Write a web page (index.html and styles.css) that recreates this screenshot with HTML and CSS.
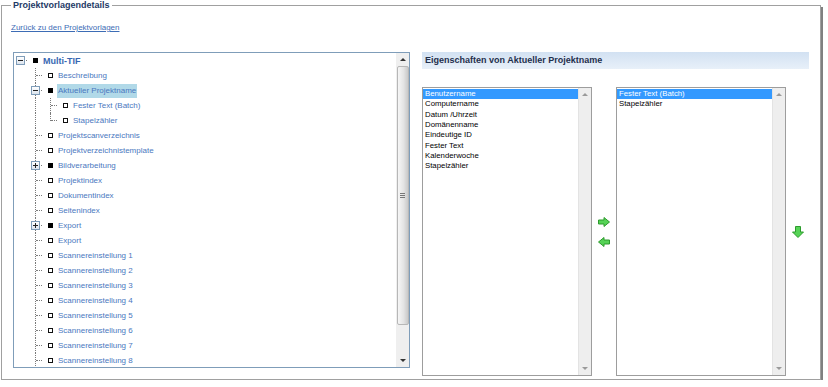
FILE: index.html
```html
<!DOCTYPE html>
<html>
<head>
    <title>Projektvorlagendetails</title>
    <link rel="stylesheet" href="styles.css">
</head>
<body>
    <fieldset class="details">
        <legend>Projektvorlagendetails</legend>
        <a class="back" href="#">Zurück zu den Projektvorlagen</a>

        <div class="main">
            <div class="tree">
                <div class="nodes">
                    <div class="row">
                        <span class="cell exp"><span class="toggle minus"></span></span>
                        <span class="box branch"></span>
                        <span class="label root">Multi-TIF</span>
                    </div>
                    <div class="row">
                        <span class="cell"></span><span class="cell tee"></span>
                        <span class="box leaf"></span><span class="label">Beschreibung</span>
                    </div>
                    <div class="row">
                        <span class="cell"></span><span class="cell tee"><span class="toggle minus"></span></span>
                        <span class="box branch"></span><span class="label selected">Aktueller Projektname</span>
                    </div>
                    <div class="row">
                        <span class="cell"></span><span class="cell pipe"></span><span class="cell tee"></span>
                        <span class="box leaf"></span><span class="label">Fester Text (Batch)</span>
                    </div>
                    <div class="row">
                        <span class="cell"></span><span class="cell pipe"></span><span class="cell elbow"></span>
                        <span class="box leaf"></span><span class="label">Stapelzähler</span>
                    </div>
                    <div class="row">
                        <span class="cell"></span><span class="cell tee"></span>
                        <span class="box leaf"></span><span class="label">Projektscanverzeichnis</span>
                    </div>
                    <div class="row">
                        <span class="cell"></span><span class="cell tee"></span>
                        <span class="box leaf"></span><span class="label">Projektverzeichnistemplate</span>
                    </div>
                    <div class="row">
                        <span class="cell"></span><span class="cell tee"><span class="toggle plus"></span></span>
                        <span class="box branch"></span><span class="label">Bildverarbeitung</span>
                    </div>
                    <div class="row">
                        <span class="cell"></span><span class="cell tee"></span>
                        <span class="box leaf"></span><span class="label">Projektindex</span>
                    </div>
                    <div class="row">
                        <span class="cell"></span><span class="cell tee"></span>
                        <span class="box leaf"></span><span class="label">Dokumentindex</span>
                    </div>
                    <div class="row">
                        <span class="cell"></span><span class="cell tee"></span>
                        <span class="box leaf"></span><span class="label">Seitenindex</span>
                    </div>
                    <div class="row">
                        <span class="cell"></span><span class="cell tee"><span class="toggle plus"></span></span>
                        <span class="box branch"></span><span class="label">Export</span>
                    </div>
                    <div class="row">
                        <span class="cell"></span><span class="cell tee"></span>
                        <span class="box leaf"></span><span class="label">Export</span>
                    </div>
                    <div class="row">
                        <span class="cell"></span><span class="cell tee"></span>
                        <span class="box leaf"></span><span class="label">Scannereinstellung 1</span>
                    </div>
                    <div class="row">
                        <span class="cell"></span><span class="cell tee"></span>
                        <span class="box leaf"></span><span class="label">Scannereinstellung 2</span>
                    </div>
                    <div class="row">
                        <span class="cell"></span><span class="cell tee"></span>
                        <span class="box leaf"></span><span class="label">Scannereinstellung 3</span>
                    </div>
                    <div class="row">
                        <span class="cell"></span><span class="cell tee"></span>
                        <span class="box leaf"></span><span class="label">Scannereinstellung 4</span>
                    </div>
                    <div class="row">
                        <span class="cell"></span><span class="cell tee"></span>
                        <span class="box leaf"></span><span class="label">Scannereinstellung 5</span>
                    </div>
                    <div class="row">
                        <span class="cell"></span><span class="cell tee"></span>
                        <span class="box leaf"></span><span class="label">Scannereinstellung 6</span>
                    </div>
                    <div class="row">
                        <span class="cell"></span><span class="cell tee"></span>
                        <span class="box leaf"></span><span class="label">Scannereinstellung 7</span>
                    </div>
                    <div class="row">
                        <span class="cell"></span><span class="cell tee"></span>
                        <span class="box leaf"></span><span class="label">Scannereinstellung 8</span>
                    </div>
                </div>
                <div class="vscroll">
                    <div class="arrow"><span class="tri up"></span></div>
                    <div class="thumb"><span class="grip"></span></div>
                    <div class="track"></div>
                    <div class="arrow"><span class="tri down"></span></div>
                </div>
            </div>

            <div class="props">
                <h3 class="props-title">Eigenschaften von Aktueller Projektname</h3>
                <div class="pickers">
                    <div class="listbox">
                        <ul class="items">
                            <li class="selected">Benutzername</li>
                            <li>Computername</li>
                            <li>Datum /Uhrzeit</li>
                            <li>Domänenname</li>
                            <li>Eindeutige ID</li>
                            <li>Fester Text</li>
                            <li>Kalenderwoche</li>
                            <li>Stapelzähler</li>
                        </ul>
                        <div class="lscroll">
                            <div class="arrow"><span class="tri up light"></span></div>
                            <div class="arrow"><span class="tri down light"></span></div>
                        </div>
                    </div>

                    <div class="movers">
                        <svg class="green" width="12" height="10" viewBox="0 0 12 10">
                            <path d="M0.5 3 H6 V0.5 L11.5 5 L6 9.5 V7 H0.5 Z"/>
                        </svg>
                        <svg class="green" width="12" height="10" viewBox="0 0 12 10">
                            <path d="M11.5 3 H6 V0.5 L0.5 5 L6 9.5 V7 H11.5 Z"/>
                        </svg>
                    </div>

                    <div class="listbox">
                        <ul class="items">
                            <li class="selected">Fester Text (Batch)</li>
                            <li>Stapelzähler</li>
                        </ul>
                        <div class="lscroll">
                            <div class="arrow"><span class="tri up light"></span></div>
                            <div class="arrow"><span class="tri down light"></span></div>
                        </div>
                    </div>

                    <div class="order">
                        <svg class="green" width="12" height="12" viewBox="0 0 12 12">
                            <path d="M3.5 0.5 H8.5 V6 H11.5 L6 11.5 L0.5 6 H3.5 Z"/>
                        </svg>
                    </div>
                </div>
            </div>
        </div>
    </fieldset>
</body>
</html>
```

FILE: styles.css
```css
body {
    margin: 0;
    background-color: #fff;
    font-family: "Liberation Sans", Arial, sans-serif;
}
.details {
    margin: 0 7px 0 1px;
    padding: 0 11px 3px 9px;
    border: 1px solid #a0a0a0;
    box-shadow: 2px 2px 0 #808080;
    min-width: 0;
}
.details legend {
    padding: 0 2px;
    font-size: 9px;
    line-height: 11px;
    font-weight: bold;
    color: #1e3a66;
}
.back {
    display: block;
    margin-top: 11px;
    font-size: 8px;
    line-height: 12px;
    color: #3d6cb5;
    text-decoration: underline;
}
.main {
    display: flex;
    gap: 12px;
    margin-top: 18px;
    align-items: flex-start;
}

/* tree */
.tree {
    display: flex;
    width: 397px;
    height: 316px;
    margin-left: 2px;
    box-sizing: border-box;
    border: 1px solid #7f9db9;
    background-color: #fff;
}
.nodes {
    flex: 1;
    overflow: hidden;
}
.row {
    display: flex;
    align-items: center;
    height: 15px;
}
.cell {
    position: relative;
    flex: none;
    width: 15px;
    height: 15px;
}
.cell.pipe::before,
.cell.tee::before,
.cell.elbow::before {
    content: "";
    position: absolute;
    left: 6px;
    top: 0;
    bottom: 0;
    border-left: 1px dotted #7a7a7a;
}
.cell.elbow::before {
    bottom: 7px;
}
.cell.exp::after,
.cell.tee::after,
.cell.elbow::after {
    content: "";
    position: absolute;
    left: 7px;
    top: 7px;
    width: 6px;
    border-top: 1px dotted #7a7a7a;
}
.toggle {
    position: absolute;
    left: 2px;
    top: 3px;
    z-index: 1;
    width: 9px;
    height: 9px;
    box-sizing: border-box;
    border: 1px solid #7f9db9;
    background: linear-gradient(#ffffff, #dce4ee);
}
.toggle::before {
    content: "";
    position: absolute;
    left: 1px;
    top: 3px;
    width: 5px;
    height: 1px;
    background-color: #222;
}
.toggle.plus::after {
    content: "";
    position: absolute;
    left: 3px;
    top: 1px;
    width: 1px;
    height: 5px;
    background-color: #222;
}
.box {
    flex: none;
    width: 5px;
    height: 5px;
    margin: 0 5px 0 4px;
    box-sizing: border-box;
}
.box.leaf {
    border: 1px solid #111;
    background-color: #fff;
}
.box.branch {
    background-color: #000;
}
.label {
    font-size: 8px;
    line-height: 14px;
    color: #4a78c0;
    white-space: nowrap;
    padding: 0 1px;
    margin-left: -1px;
}
.label.root {
    font-size: 9px;
    font-weight: bold;
    color: #3867b2;
}
.label.selected {
    background-color: #b1d9e8;
}

/* scrollbars */
.vscroll {
    display: flex;
    flex-direction: column;
    flex: none;
    width: 13px;
    background-color: #efefef;
}
.arrow {
    display: flex;
    align-items: center;
    justify-content: center;
    height: 13px;
}
.thumb {
    display: flex;
    align-items: center;
    justify-content: center;
    height: 259px;
    box-sizing: border-box;
    margin: 0 0 0 1px;
    border: 1px solid #b7b7b7;
    border-radius: 2px;
    background: linear-gradient(to right, #f6f6f6, #e4e4e4 55%, #c9c9c9);
}
.grip {
    width: 5px;
    height: 5px;
    margin-right: 1px;
    background: repeating-linear-gradient(#777 0 1px, transparent 1px 2px);
}
.track {
    flex: 1;
}
.tri {
    width: 0;
    height: 0;
    border-left: 3px solid transparent;
    border-right: 3px solid transparent;
}
.tri.up {
    border-bottom: 3px solid #333;
}
.tri.down {
    border-top: 3px solid #333;
}
.tri.light.up {
    border-bottom-color: #9a9a9a;
}
.tri.light.down {
    border-top-color: #9a9a9a;
}

/* properties */
.props {
    width: 387px;
}
.props-title {
    margin: 0;
    height: 17px;
    padding-left: 3px;
    font-size: 9px;
    line-height: 17px;
    font-weight: bold;
    color: #1f2f4d;
    background: linear-gradient(#d2e1f2, #e8f0f9);
}
.pickers {
    display: flex;
    height: 289px;
    margin-top: 18px;
}
.listbox {
    display: flex;
    width: 170px;
    box-sizing: border-box;
    border: 1px solid #9d9d9d;
    background-color: #fff;
}
.items {
    flex: 1;
    margin: 0;
    padding: 1px 0 0;
    list-style: none;
}
.items li {
    padding-left: 2px;
    font-size: 7.8px;
    line-height: 10.33px;
    color: #000;
    white-space: nowrap;
}
.items li.selected {
    background-color: #3399ff;
    color: #fff;
}
.lscroll {
    display: flex;
    flex-direction: column;
    justify-content: space-between;
    flex: none;
    width: 12px;
    border-left: 1px solid #e3e3e3;
    background-color: #eeeeee;
}
.movers,
.order {
    display: flex;
    flex-direction: column;
    align-items: center;
    justify-content: center;
    width: 24px;
    gap: 10px;
}
.order {
    width: 23px;
}
.green path {
    fill: #56d356;
    stroke: #2d9b2d;
    stroke-width: 1;
}
```
